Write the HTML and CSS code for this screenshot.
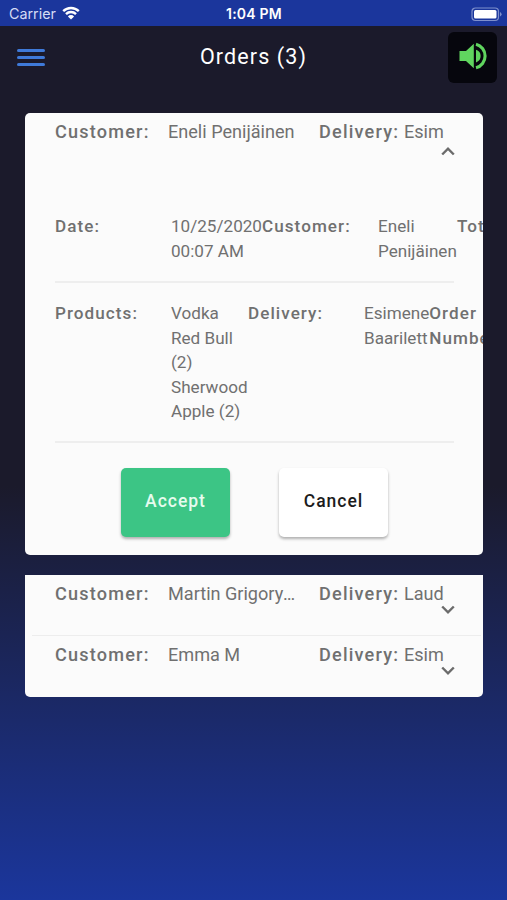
FILE: index.html
```html
<!DOCTYPE html>
<html lang="en">
<head>
  <meta charset="utf-8">
  <title>Orders</title>
  <link rel="stylesheet" href="styles.css">
</head>
<body>
  <div class="status-bar">
    <div class="carrier">
      <span>Carrier</span>
      <svg class="wifi" viewBox="0 0 18 14" width="18" height="14">
        <path d="M1.2 5.1a11.2 11.2 0 0 1 15.6 0M4 8.1a7.1 7.1 0 0 1 10 0" fill="none" stroke="#fff" stroke-width="2.4"/>
        <path d="M9 13.6L5.9 10.4a4.4 4.4 0 0 1 6.2 0z" fill="#fff"/>
      </svg>
    </div>
    <span class="time">1:04 PM</span>
    <svg class="battery" viewBox="0 0 31 15" width="31" height="15">
      <rect x="1" y="1" width="26.5" height="12.5" rx="3.5" fill="none" stroke="#7f90cc" stroke-width="1.2"/>
      <rect x="3" y="3" width="22.5" height="8.5" rx="1.5" fill="#fff"/>
      <path d="M29 5v4.5q1.6-.8 1.6-2.2T29 5z" fill="#7f90cc"/>
    </svg>
  </div>

  <header class="header">
    <button class="menu" aria-label="Menu">
      <span></span><span></span><span></span>
    </button>
    <h1>Orders (3)</h1>
    <button class="sound" aria-label="Sound">
      <svg viewBox="0 0 28 28" width="28" height="28">
        <path fill="#60d55f" d="M.5 9H7l7.8-7.2v24.4L7 19H.5zM17 7.8a6.6 6.6 0 0 1 0 12.6z"/>
        <path fill="none" stroke="#60d55f" stroke-width="3.1" d="M17 2.2a12.2 12.2 0 0 1 0 23.6"/>
      </svg>
    </button>
  </header>

  <main class="orders">
    <section class="card open">
      <div class="summary">
        <b>Customer:</b>
        <span class="name">Eneli Penijäinen</span>
        <b>Delivery:</b>
        <span>Esim</span>
        <svg class="chevron" viewBox="0 0 14 9" width="14" height="9"><path d="M1.2 7.5L7 1.7l5.8 5.8"/></svg>
      </div>
      <div class="details">
        <div class="row">
          <b>Date:</b>
          <span class="date">10/25/2020 00:07 AM</span>
          <b>Customer:</b>
          <span>Eneli<br>Penijäinen</span>
          <b>Total:</b>
        </div>
        <div class="row">
          <b>Products:</b>
          <span class="products">Vodka<br>Red Bull<br>(2)<br>Sherwood<br>Apple (2)</span>
          <b>Delivery:</b>
          <span class="bar">Esimene Baarilett</span>
          <b>Order Number:</b>
        </div>
        <div class="actions">
          <button class="accept">Accept</button>
          <button class="cancel">Cancel</button>
        </div>
      </div>
    </section>

    <section class="card closed">
      <div class="summary">
        <b>Customer:</b>
        <span class="name">Martin Grigoryan</span>
        <b>Delivery:</b>
        <span>Laud</span>
        <svg class="chevron" viewBox="0 0 14 9" width="14" height="9"><path d="M1.2 1.5L7 7.3l5.8-5.8"/></svg>
      </div>
      <div class="summary">
        <b>Customer:</b>
        <span class="name">Emma M</span>
        <b>Delivery:</b>
        <span>Esim</span>
        <svg class="chevron" viewBox="0 0 14 9" width="14" height="9"><path d="M1.2 1.5L7 7.3l5.8-5.8"/></svg>
      </div>
    </section>
  </main>
</body>
</html>
```
FILE: styles.css
```css
* {
  box-sizing: border-box;
}
body {
  margin: 0;
  height: 900px;
  overflow: hidden;
  font-family: Roboto, sans-serif;
  font-size: 18.1px;
  line-height: 24.5px;
  color: #707070;
  background: linear-gradient(#1b1a2b 0, #1b1a2b 54%, #1b369c 100%);
}
button {
  border: none;
  font-family: inherit;
  cursor: pointer;
}
b {
  font-weight: 500;
  letter-spacing: 1.2px;
}
.status-bar {
  display: grid;
  grid-template-columns: 1fr auto 1fr;
  align-items: center;
  height: 26px;
  padding: 2px 8px 0 9px;
  background: #1b369c;
  color: #fff;
  font-family: Inter, sans-serif;
  font-size: 14.3px;
}
.carrier {
  display: flex;
  align-items: center;
  gap: 6px;
  color: #d5dcf5;
}
.wifi {
  margin-top: -2px;
}
.time {
  font-size: 14px;
  font-weight: 600;
  letter-spacing: 0.2px;
}
.battery {
  justify-self: end;
  margin-right: -3px;
}
.header {
  display: grid;
  grid-template-columns: 1fr auto 1fr;
  align-items: center;
  height: 62px;
  padding: 0 10px;
}
.header h1 {
  margin: 0;
  color: #fff;
  font-size: 21.5px;
  font-weight: 400;
  letter-spacing: 1.1px;
}
.menu {
  display: flex;
  flex-direction: column;
  gap: 4px;
  width: 28px;
  margin-left: 7px;
  padding: 0;
  background: none;
}
.menu span {
  height: 3px;
  border-radius: 2px;
  background: #3f7ad9;
}
.sound {
  justify-self: end;
  display: flex;
  align-items: center;
  justify-content: center;
  width: 49px;
  height: 51px;
  padding: 0 0 3px;
  border-radius: 6px;
  background: #06060d;
}
.orders {
  display: flex;
  flex-direction: column;
  gap: 20px;
  padding: 25px 24.5px 0 25px;
}
.card {
  overflow: hidden;
  border-radius: 5px;
  background: #fbfbfb;
}
.open {
  height: 442px;
}
.closed {
  height: 122px;
  border-radius: 0 0 5px 5px;
}
.summary {
  position: relative;
  display: grid;
  grid-template-columns: 113px 151px 85px 41px;
  height: 61px;
  padding: 7px 0 0 30px;
  white-space: nowrap;
}
.summary + .summary::before {
  content: "";
  position: absolute;
  top: -1px;
  left: 7px;
  right: 2px;
  height: 1px;
  background: #ededed;
}
.name {
  width: 130px;
  overflow: hidden;
  text-overflow: ellipsis;
}
.chevron {
  position: absolute;
  top: 30px;
  right: 28px;
  fill: none;
  stroke: #6b6b6b;
  stroke-width: 2.4;
}
.open .summary {
  height: 88px;
}
.open .chevron {
  top: 34px;
}
.details {
  padding: 0 29px 0 30px;
  font-size: 17.1px;
}
.details b {
  letter-spacing: 1.05px;
}
.row {
  display: flex;
  padding: 13px 0 18px;
  border-bottom: 2px solid #eeeeee;
}
.row + .row {
  padding: 18px 0 17px;
}
.row b {
  flex: 0 0 116px;
}
.row span {
  flex: 0 0 79px;
}
.row .date {
  flex-basis: 91px;
}
.row .products {
  flex-basis: 77px;
}
.row .bar {
  flex-basis: 65px;
}
.row b:last-child {
  flex-basis: 70px;
}
.actions {
  display: flex;
  gap: 49px;
  padding: 25px 0 0 66px;
}
.actions button {
  width: 109px;
  height: 69px;
  padding: 0 0 3px;
  border-radius: 5px;
  font-size: 17.5px;
  font-weight: 500;
  letter-spacing: 1px;
  box-shadow: 0 2px 3px rgba(0, 0, 0, 0.3);
}
.actions .accept {
  background: #3cc585;
  color: #e6fbee;
}
.actions .cancel {
  background: #fff;
  color: #1c1c1c;
}
```
